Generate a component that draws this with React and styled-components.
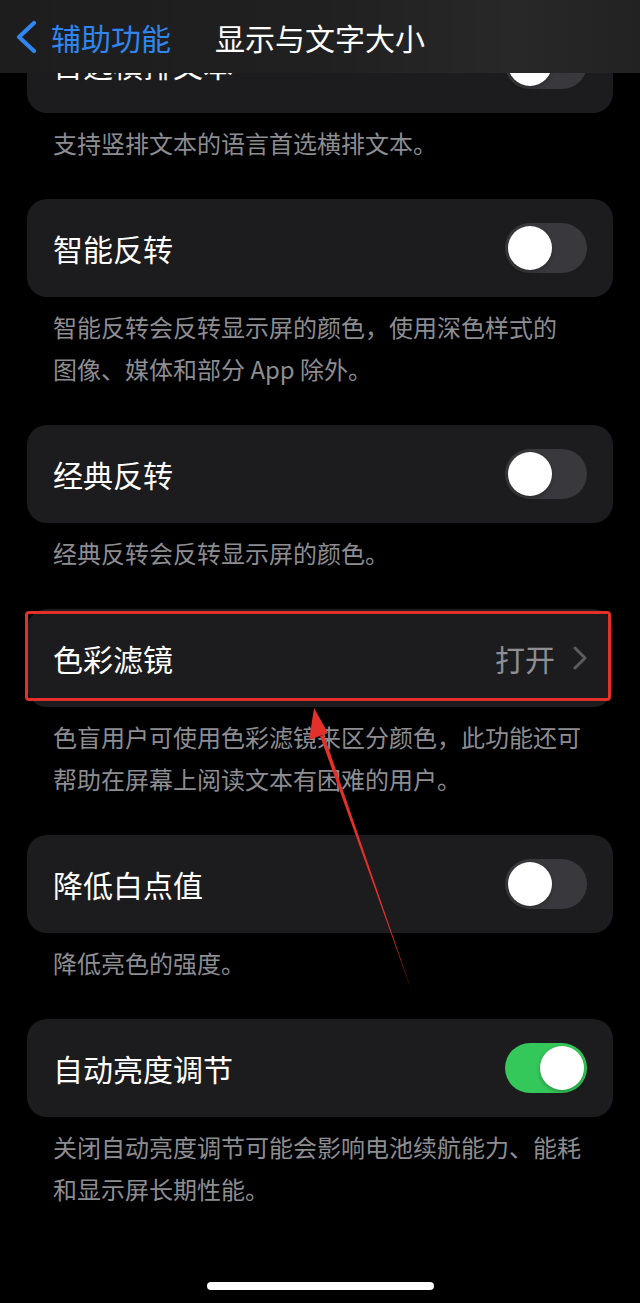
import React from "react";
import styled, { createGlobalStyle } from "styled-components";

const Global = createGlobalStyle`
  html, body { margin: 0; padding: 0; background: #000; }
  body { font-family: "Noto Sans CJK SC", "Noto Sans", sans-serif; -webkit-font-smoothing: antialiased; }
  * { box-sizing: border-box; }
`;

const Page = styled.div`
  position: relative;
  width: 640px;
  min-height: 1303px;
  background: #000;
  display: flex;
  flex-direction: column;
  padding-top: 15px;
  overflow: hidden;
`;

const NavBar = styled.div`
  position: absolute;
  top: 0;
  left: 0;
  right: 0;
  height: 73px;
  background: linear-gradient(90deg, #1d1d1d 0%, #202020 50%, #282828 80%, #222 100%);
  display: flex;
  align-items: center;
  z-index: 5;
`;

const BackButton = styled.div`
  display: flex;
  align-items: center;
  gap: 14px;
  padding-left: 15px;
  color: #2f86f0;
  font-size: 30px;
  line-height: 1;
`;

const Title = styled.div`
  position: absolute;
  left: 0;
  right: 0;
  text-align: center;
  color: #fff;
  font-size: 30px;
  line-height: 1;
  pointer-events: none;
`;

const Section = styled.section`
  display: flex;
  flex-direction: column;
  padding: 0 27px;
`;

const Card = styled.div`
  position: relative;
  height: 98px;
  background: #1c1c1e;
  border-radius: 20px;
  display: flex;
  align-items: center;
  justify-content: space-between;
  padding: 0 26px;
`;

const Label = styled.span`
  color: #fff;
  font-size: 30px;
  line-height: 1;
`;

const Value = styled.span`
  display: flex;
  align-items: center;
  gap: 18px;
  color: #8e8e93;
  font-size: 30px;
  line-height: 1;
`;

const Footer = styled.div`
  padding: 9px 26px 35px;
  color: #8d8d92;
  font-size: 24px;
  line-height: 42px;
  white-space: nowrap;
`;

const Track = styled.div`
  width: 82px;
  height: 50px;
  border-radius: 25px;
  background: ${(p) => (p.$on ? "#34c759" : "#39393d")};
  display: flex;
  align-items: center;
  justify-content: ${(p) => (p.$on ? "flex-end" : "flex-start")};
  padding: 0 3px;
`;

const Knob = styled.div`
  width: 44px;
  height: 44px;
  border-radius: 50%;
  background: #fff;
  box-shadow: 0 2px 4px rgba(0, 0, 0, 0.25);
`;

const Highlight = styled.div`
  position: absolute;
  left: -2px;
  right: 2px;
  top: 2px;
  bottom: 6px;
  border: 3px solid #e3302a;
  border-radius: 4px;
  pointer-events: none;
`;

const Overlay = styled.svg`
  position: absolute;
  left: 0;
  top: 0;
  pointer-events: none;
  z-index: 4;
`;

const HomeBar = styled.div`
  margin: auto auto 13px;
  width: 227px;
  height: 8px;
  border-radius: 4px;
  background: #fff;
`;

const Toggle = ({ on }) => (
  <Track $on={on}>
    <Knob />
  </Track>
);

const Chevron = () => (
  <svg width="14" height="24" viewBox="0 0 14 24">
    <polyline points="2,2 12,12 2,22" fill="none" stroke="#5b5b60" strokeWidth="3" strokeLinecap="round" strokeLinejoin="round" />
  </svg>
);

const sections = [
  { label: "首选横排文本", toggle: false, lines: ["支持竖排文本的语言首选横排文本。"] },
  { label: "智能反转", toggle: false, lines: ["智能反转会反转显示屏的颜色，使用深色样式的", "图像、媒体和部分 App 除外。"] },
  { label: "经典反转", toggle: false, lines: ["经典反转会反转显示屏的颜色。"] },
  { label: "色彩滤镜", value: "打开", highlight: true, lines: ["色盲用户可使用色彩滤镜来区分颜色，此功能还可", "帮助在屏幕上阅读文本有困难的用户。"] },
  { label: "降低白点值", toggle: false, lines: ["降低亮色的强度。"] },
  { label: "自动亮度调节", toggle: true, lines: ["关闭自动亮度调节可能会影响电池续航能力、能耗", "和显示屏长期性能。"] },
];

export default function App() {
  return (
    <>
      <Global />
      <Page>
        <NavBar>
          <BackButton>
            <svg width="22" height="34" viewBox="0 0 22 34">
              <polyline points="19,3 4,17 19,31" fill="none" stroke="#2f86f0" strokeWidth="4.2" strokeLinecap="round" strokeLinejoin="round" />
            </svg>
            <span>辅助功能</span>
          </BackButton>
          <Title>显示与文字大小</Title>
        </NavBar>

        {sections.map((s) => (
          <Section key={s.label}>
            <Card>
              <Label>{s.label}</Label>
              {s.value ? (
                <Value>
                  {s.value}
                  <Chevron />
                </Value>
              ) : (
                <Toggle on={s.toggle} />
              )}
              {s.highlight && <Highlight />}
            </Card>
            <Footer>
              {s.lines.map((l, i) => (
                <React.Fragment key={i}>
                  {i > 0 && <br />}
                  {l}
                </React.Fragment>
              ))}
            </Footer>
          </Section>
        ))}

        <HomeBar />

        <Overlay width="640" height="1303" viewBox="0 0 640 1303">
          <polygon points="412,992 320,736 324,735" fill="#e3302a" />
          <polygon points="314,708 309,740 328,733" fill="#e3302a" />
        </Overlay>
      </Page>
    </>
  );
}
